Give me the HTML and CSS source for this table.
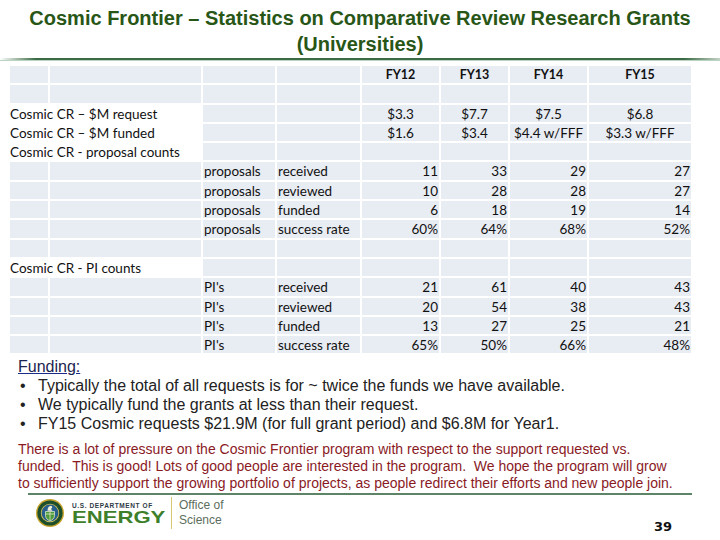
FILE: index.html
```html
<!DOCTYPE html>
<html>
<head>
<meta charset="utf-8">
<title>Cosmic Frontier – Statistics</title>
<link rel="stylesheet" href="styles.css">
</head>
<body>
<header class="title">
  <h1>Cosmic Frontier – Statistics on Comparative Review Research Grants<br>(Universities)</h1>
  <div class="rule"></div>
</header>

<div class="table">
  <div></div><div></div><div></div><div></div>
  <div class="h">FY12</div><div class="h">FY13</div><div class="h">FY14</div><div class="h">FY15</div>

  <div></div><div></div><div></div><div></div><div></div><div></div><div></div><div></div>

  <div class="label">Cosmic CR – $M request</div><div></div><div></div>
  <div class="c">$3.3</div><div class="c">$7.7</div><div class="c">$7.5</div><div class="c">$6.8</div>

  <div class="label">Cosmic CR – $M funded</div><div></div><div></div>
  <div class="c">$1.6</div><div class="c">$3.4</div><div class="c">$4.4 w/FFF</div><div class="c">$3.3 w/FFF</div>

  <div class="label">Cosmic CR - proposal counts</div><div></div><div></div>
  <div></div><div></div><div></div><div></div>

  <div></div><div></div><div>proposals</div><div>received</div>
  <div class="n">11</div><div class="n">33</div><div class="n">29</div><div class="n">27</div>

  <div></div><div></div><div>proposals</div><div>reviewed</div>
  <div class="n">10</div><div class="n">28</div><div class="n">28</div><div class="n">27</div>

  <div></div><div></div><div>proposals</div><div>funded</div>
  <div class="n">6</div><div class="n">18</div><div class="n">19</div><div class="n">14</div>

  <div></div><div></div><div>proposals</div><div>success rate</div>
  <div class="n">60%</div><div class="n">64%</div><div class="n">68%</div><div class="n">52%</div>

  <div></div><div></div><div></div><div></div><div></div><div></div><div></div><div></div>

  <div class="label">Cosmic CR - PI counts</div><div></div><div></div>
  <div></div><div></div><div></div><div></div>

  <div></div><div></div><div>PI's</div><div>received</div>
  <div class="n">21</div><div class="n">61</div><div class="n">40</div><div class="n">43</div>

  <div></div><div></div><div>PI's</div><div>reviewed</div>
  <div class="n">20</div><div class="n">54</div><div class="n">38</div><div class="n">43</div>

  <div></div><div></div><div>PI's</div><div>funded</div>
  <div class="n">13</div><div class="n">27</div><div class="n">25</div><div class="n">21</div>

  <div></div><div></div><div>PI's</div><div>success rate</div>
  <div class="n">65%</div><div class="n">50%</div><div class="n">66%</div><div class="n">48%</div>
</div>

<section class="notes">
  <div class="funding">Funding:</div>
  <ul>
    <li>Typically the total of all requests is for ~ twice the funds we have available.</li>
    <li>We typically fund the grants at less than their request.</li>
    <li>FY15 Cosmic requests $21.9M (for full grant period) and $6.8M for Year1.</li>
  </ul>
</section>

<p class="pressure">There is a lot of pressure on the Cosmic Frontier program with respect to the support requested vs.<br>funded.&nbsp; This is good! Lots of good people are interested in the program.&nbsp; We hope the program will grow<br>to sufficiently support the growing portfolio of projects, as people redirect their efforts and new people join.</p>

<div class="footrule"></div>

<footer class="footer">
  <div class="logo">
    <svg class="seal" width="28" height="28" viewBox="0 0 28 28">
      <circle cx="14" cy="14" r="14" fill="#c8a42c"/>
      <circle cx="14" cy="14" r="12.6" fill="#1d4f2c"/>
      <circle cx="14" cy="14" r="9.2" fill="#d9c25a"/>
      <circle cx="14" cy="14" r="8.4" fill="#27608c"/>
      <path d="M9.5 12.5 H18.5 V16.5 C18.5 19.5 16 21 14 22 C12 21 9.5 19.5 9.5 16.5 Z" fill="#4f9a38" stroke="#f3f3e0" stroke-width="0.7"/>
      <path d="M9.8 15 H18.2 M14 12.6 V21.6" stroke="#f3f3e0" stroke-width="0.7"/>
      <path d="M11.5 11.8 C11.5 8.6 13 7 14.6 7 C16.2 7 16.8 8.4 15.6 9.2 C14.6 9.8 15.6 10.8 16.6 11.8 Z" fill="#f4f0d8"/>
    </svg>
    <div class="doe">
      <div class="dept">U.S. DEPARTMENT OF</div>
      <div class="energy">ENERGY</div>
    </div>
    <div class="divider"></div>
    <div class="office">Office of<br>Science</div>
  </div>
  <div class="pagenum">39</div>
</footer>
</body>
</html>
```

FILE: styles.css
```css
html, body {
  margin: 0;
  padding: 0;
}

body {
  width: 720px;
  height: 540px;
  overflow: hidden;
  background: #ffffff;
  font-family: "Liberation Sans", Arial, sans-serif;
}

.title h1 {
  margin: 0;
  padding-top: 5px;
  text-align: center;
  font-family: "Liberation Sans Narrow", "Arial Narrow", "Liberation Sans", sans-serif;
  font-weight: bold;
  font-size: 20px;
  line-height: 26px;
  color: #285617;
}

.rule {
  margin-top: 1px;
  height: 2px;
  background: linear-gradient(to right, rgba(58, 107, 69, 0), #3a6b45 5%, #3a6b45 95%, rgba(58, 107, 69, 0.3));
  box-shadow: 0 1px 0 #bcd3c2;
}

.table {
  display: grid;
  grid-template-columns: 38px 151px 72px 83px 77px 67px 77px 102px;
  grid-auto-rows: 17.3px;
  gap: 2px;
  margin: 6px 0 0 10px;
  width: 681px;
  font-family: Lato, "Open Sans", sans-serif;
  font-size: 13.5px;
  color: #111111;
}

.table > div {
  background: #e8ecf3;
  line-height: 18.5px;
  white-space: nowrap;
  padding: 0 1px;
  font-variant-numeric: tabular-nums;
}

.table > .label {
  grid-column: span 2;
  background: transparent;
  padding-left: 0;
}

.table > .h {
  text-align: center;
  font-weight: bold;
  font-size: 12.5px;
}

.table > .c {
  text-align: center;
}

.table > .n {
  text-align: right;
}

.notes {
  margin: 4px 0 0 18px;
  font-family: "Liberation Sans Narrow", "Arial Narrow", "Liberation Sans", sans-serif;
  font-size: 16px;
  line-height: 19px;
  color: #222222;
}

.funding {
  color: #1c2450;
  text-decoration: underline;
  text-decoration-color: #1c2a8a;
}

.notes ul {
  list-style: none;
  margin: 0;
  padding: 0;
}

.notes li {
  display: flex;
}

.notes li::before {
  content: "•";
  flex: 0 0 20px;
  padding-left: 2px;
  box-sizing: border-box;
}

.pressure {
  margin: 8px 0 0 18px;
  font-family: "Liberation Sans Narrow", "Arial Narrow", "Liberation Sans", sans-serif;
  font-size: 14px;
  line-height: 17px;
  color: #8a1a1f;
  white-space: nowrap;
}

.footrule {
  margin: 1px 0 0 28px;
  width: 664px;
  height: 2px;
  background: #5d8466;
}

.footer {
  display: flex;
  justify-content: space-between;
  height: 46px;
}

.logo {
  display: flex;
  align-items: center;
  margin: 2px 0 0 36px;
  height: 32px;
}

.seal {
  display: block;
}

.doe {
  margin-left: 8px;
  display: flex;
  flex-direction: column;
  gap: 2px;
}

.dept {
  font-size: 6.5px;
  font-weight: bold;
  letter-spacing: 0.6px;
  color: #2e3a46;
  line-height: 7px;
}

.energy {
  font-size: 17px;
  font-weight: 900;
  line-height: 13px;
  color: #3d7f2b;
  transform: scaleX(1.3);
  transform-origin: left center;
  width: 92px;
}

.divider {
  width: 1px;
  height: 32px;
  background: #d6c770;
  margin-left: 7px;
}

.office {
  margin-left: 7px;
  font-size: 12px;
  line-height: 15px;
  color: #5c6e5c;
}

.pagenum {
  align-self: flex-end;
  margin: 0 48px 7px 0;
  font-family: "DejaVu Sans", sans-serif;
  font-weight: bold;
  font-size: 13px;
  color: #111111;
}
```
